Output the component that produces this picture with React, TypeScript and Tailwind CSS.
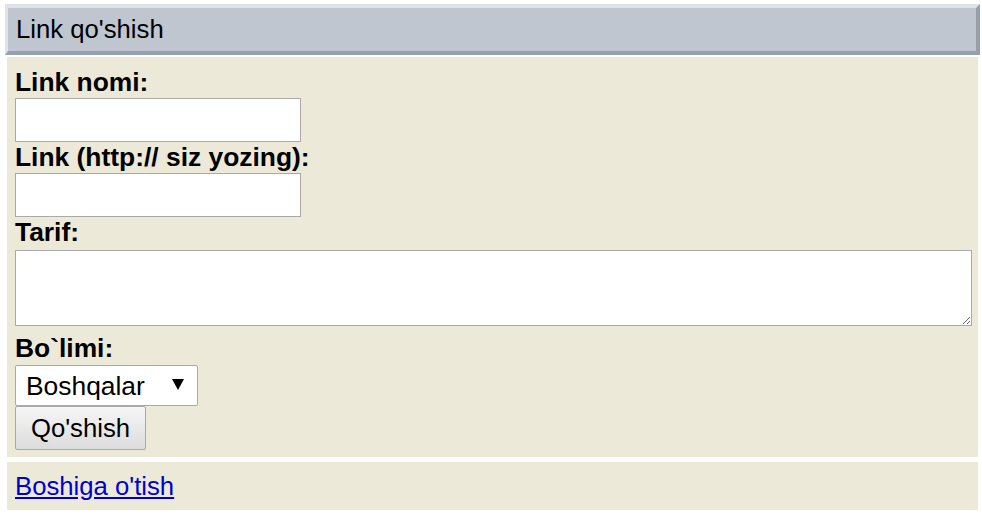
export default function App() {
  return (
    <div className="min-h-screen bg-white pt-1 font-['Liberation_Sans',Arial,sans-serif] text-black">
      <div className="ml-[5px] flex h-[51px] w-[975px] items-center border-[4px] border-l-[3px] border-t-[#dfe2e7] border-l-[#dfe2e7] border-r-[#97a1ad] border-b-[#97a1ad] bg-[#bfc6d0] pl-[8px] text-[25.7px] leading-[29px]">
        Link qo'shish
      </div>

      <form className="ml-[7px] mt-[2px] flex w-[971px] flex-col items-start bg-[#ece9d8] pb-[7px] pl-2 pr-[6px] pt-[10px]">
        <label className="h-[30px] text-[26.4px] font-bold leading-[30px]">Link nomi:</label>
        <input type="text" className="mt-px h-[44px] w-[286px] border border-[#a9a9a9] bg-white px-1 text-[22px] outline-none" />

        <label className="h-[30px] text-[26.4px] font-bold leading-[30px]">Link (http:// siz yozing):</label>
        <input type="text" className="mt-px h-[44px] w-[286px] border border-[#a9a9a9] bg-white px-1 text-[22px] outline-none" />

        <label className="h-[30px] text-[26.4px] font-bold leading-[30px]">Tarif:</label>
        <textarea className="mt-[3px] block h-[76px] w-[957px] border border-[#a9a9a9] bg-white p-1 text-[20px] outline-none" />

        <label className="mt-[7px] h-[30px] text-[26.4px] font-bold leading-[30px]">Bo`limi:</label>
        <div className="relative mt-[2px] h-[41px] w-[183px]">
          <select
            defaultValue="Boshqalar"
            className="h-full w-full appearance-none rounded-[2px] border border-[#a9a9a9] bg-white pl-[10px] text-[26.4px] leading-[30px] outline-none"
          >
            <option>Boshqalar</option>
          </select>
          <svg className="pointer-events-none absolute left-[157px] top-[14px]" width="12" height="11" viewBox="0 0 12 11">
            <polygon points="0,0 12,0 6,11" fill="#000" />
          </svg>
        </div>
        <button
          type="button"
          className="h-[44px] w-[131px] rounded-[2px] border border-[#a9a9a9] bg-gradient-to-b from-[#f6f6f6] to-[#dcdcdc] text-[25.7px] leading-[29px]"
        >
          Qo'shish
        </button>
      </form>

      <div className="ml-[7px] mt-[5px] h-[48px] w-[971px] bg-[#ece9d8] pl-2 pt-[10px] text-[25.7px] leading-[29px]">
        <a href="#" className="text-[#0000cc] underline">
          Boshiga o'tish
        </a>
      </div>
    </div>
  );
}
